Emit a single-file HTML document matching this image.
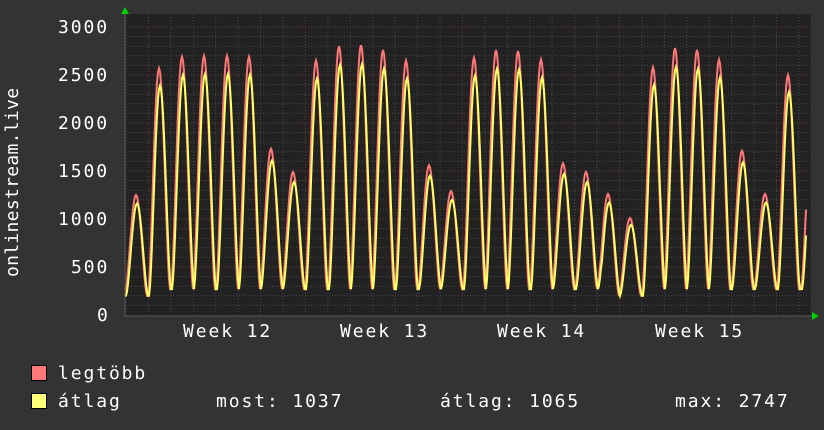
<!DOCTYPE html>
<html><head><meta charset="utf-8"><style>
html,body{margin:0;padding:0;background:#333;}
body{width:824px;height:430px;overflow:hidden;position:relative;font-family:"DejaVu Sans Mono","Liberation Mono",monospace;color:#fff;}
.t{position:absolute;font-size:18px;letter-spacing:1.9px;white-space:pre;line-height:1;}
.sq{position:absolute;width:14px;height:14px;border:1px solid #000;}
</style></head><body>
<svg id="g" width="824" height="430" style="position:absolute;left:0;top:0">
<rect x="125" y="14" width="686" height="302" fill="#222"/>
<g id="grid"></g>
<path id="red" fill="none" stroke="#ff7777" stroke-width="2"/>
<path id="yel" fill="none" stroke="#ffff66" stroke-width="2"/>
<line x1="125" y1="10" x2="125" y2="316" stroke="#555" stroke-width="1"/>
<line x1="124" y1="316" x2="815" y2="316" stroke="#555" stroke-width="1"/>
<polygon points="121,14 125,7 129,14" fill="#0c0"/>
<polygon points="812,312 819,316 812,320" fill="#0c0"/>
</svg>
<div class="t" style="left:58px;top:19px">3000</div>
<div class="t" style="left:58px;top:67px">2500</div>
<div class="t" style="left:58px;top:115px">2000</div>
<div class="t" style="left:58px;top:163px">1500</div>
<div class="t" style="left:58px;top:211px">1000</div>
<div class="t" style="left:71px;top:259px">500</div>
<div class="t" style="left:97px;top:307px">0</div>
<div class="t" style="left:-79px;top:176px;transform:rotate(-90deg);width:184px;text-align:center;letter-spacing:0.3px">onlinestream.live</div>
<div class="t" style="left:183px;top:323px">Week 12</div>
<div class="t" style="left:340px;top:323px">Week 13</div>
<div class="t" style="left:497px;top:323px">Week 14</div>
<div class="t" style="left:655px;top:323px">Week 15</div>
<div class="sq" style="left:31px;top:365px;background:#ff7777"></div>
<div class="sq" style="left:31px;top:393px;background:#ffff77"></div>
<div class="t" style="left:58px;top:365px">legtöbb</div>
<div class="t" style="left:58px;top:393px">átlag</div>
<div class="t" style="left:216px;top:393px">most: 1037</div>
<div class="t" style="left:440px;top:393px">átlag: 1065</div>
<div class="t" style="left:675px;top:393px">max: 2747</div>
<script>
var g=document.getElementById("grid"),h="";
for(var v=100;v<=3000;v+=100){var y=315-v*0.096;var maj=v%500==0;
h+='<line x1="125" x2="811" y1="'+y+'" y2="'+y+'" stroke="'+(maj?'#6a3a3a':'#4a4a4a')+'" stroke-dasharray="1,2"/>';}
for(var x=126;x<811;x+=22.43){var d=Math.abs(((x-148)%157+157)%157);var maj=d<2||d>155;
h+='<line y1="14" y2="316" x1="'+x+'" x2="'+x+'" stroke="'+(maj?'#6a3a3a':'#4a4a4a')+'" stroke-dasharray="1,2"/>';}
g.innerHTML=h;
var P=[[136,1250],[159,2570],[182,2690],[204,2700],[227,2700],[249,2690],[271,1730],[293,1490],[316,2650],[339,2800],[361,2810],[383,2760],[406,2650],[429,1560],[451,1290],[474,2680],[496,2760],[518,2750],[541,2660],[563,1580],[586,1490],[608,1260],[630,1010],[653,2580],[675,2780],[697,2760],[719,2660],[742,1710],[765,1260],[788,2500],[812,1900]];
function val(x,k){var b=x<160?200:(x>600&&x<660?200:270);var m=b;
for(var i=0;i<P.length;i++){var dx=x-P[i][0];if(Math.abs(dx)<11){var c=Math.cos(dx/11*Math.PI/2);var s=b+(P[i][1]*k-b)*Math.pow(c,1.6);if(s>m)m=s;}}return m;}
function path(k,off){var s="";for(var x=125;x<=806;x++){var v=val(x+off,k);s+=(x==125?"M":"L")+x+","+(315-v*0.096).toFixed(1);}return s;}
document.getElementById("red").setAttribute("d",path(1,0));
document.getElementById("yel").setAttribute("d",path(0.93,-1));
</script>
</body></html>
